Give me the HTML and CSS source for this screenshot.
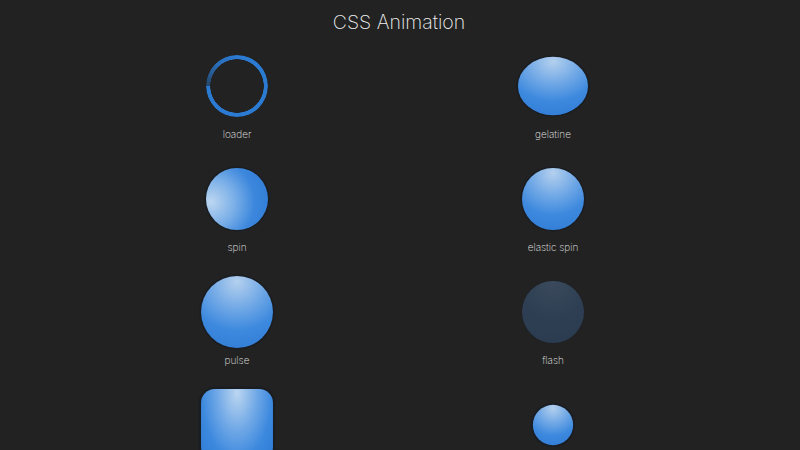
FILE: index.html
```html
<!DOCTYPE html>
<html>
<head>
<meta charset="utf-8">
<link rel="stylesheet" href="styles.css">
</head>
<body>
<h1 class="title">CSS Animation</h1>
<div class="grid">
  <div class="item"><div class="stage"><div class="loader"></div></div><div class="label">loader</div></div>
  <div class="item"><div class="stage"><div class="ball gelatine"></div></div><div class="label">gelatine</div></div>
  <div class="item"><div class="stage"><div class="ball spin"></div></div><div class="label">spin</div></div>
  <div class="item"><div class="stage"><div class="ball"></div></div><div class="label">elastic spin</div></div>
  <div class="item"><div class="stage"><div class="ball pulse"></div></div><div class="label">pulse</div></div>
  <div class="item"><div class="stage"><div class="ball flash"></div></div><div class="label">flash</div></div>
  <div class="item"><div class="stage"><div class="ball square"></div></div></div>
  <div class="item"><div class="stage"><div class="ball small"></div></div></div>
</div>
</body>
</html>
```
FILE: styles.css
```css
html, body {
  margin: 0;
  padding: 0;
  background: #222222;
  height: 100%;
  overflow: hidden;
}
body {
  font-family: Inter, "Noto Sans", sans-serif;
  color: #d8d8d8;
}
.title {
  margin: 0;
  height: 55px;
  padding-top: 9px;
  box-sizing: border-box;
  text-align: center;
  font-size: 19.5px;
  font-weight: 200;
  line-height: 26px;
  color: #f0f0f0;
  padding-right: 2px;
}
.grid {
  display: grid;
  grid-template-columns: 316px 316px;
  grid-auto-rows: 113px;
  justify-content: center;
  padding-right: 10px;
}
.item {
  display: flex;
  flex-direction: column;
  align-items: center;
}
.stage {
  width: 62px;
  height: 62px;
  position: relative;
}
.label {
  margin-top: 10px;
  font-size: 10px;
  line-height: 14px;
  font-weight: 200;
  color: #e0e0e0;
}
.loader {
  width: 62px;
  height: 62px;
  border-radius: 50%;
  background: conic-gradient(from 270deg, #24466a 0deg, #2b6eb8 50deg, #2b7bd3 90deg, #2b7bd3 360deg);
  -webkit-mask: radial-gradient(circle, transparent 26.5px, #000 27px);
  mask: radial-gradient(circle, transparent 26.5px, #000 27px);
}
.ball {
  width: 62px;
  height: 62px;
  border-radius: 50%;
  background: radial-gradient(circle at 50% 8%, #b4d0ee 0%, #72a9e6 35%, #3d89de 65%, #2f7bd6 100%);
  box-shadow: 0 0 0 1.5px #1a1d22;
}
.gelatine {
  transform: scale(1.13, 0.94);
}
.spin {
  background: radial-gradient(circle at 8% 55%, #bcd6f0 0%, #7cb0e8 35%, #3d88dd 65%, #2c78d4 100%);
}
.pulse {
  transform: scale(1.16);
}
.flash {
  background: radial-gradient(circle at 50% 5%, #3a4a5c 0%, #2f3f53 50%, #2a3b50 100%);
  box-shadow: 0 0 0 1px #1f2226;
}
.square {
  border-radius: 12px;
  transform: scale(1.16);
  background: radial-gradient(ellipse at 50% 5%, #bcd6f0 0%, #6ea7e6 40%, #3b88de 70%, #2f7bd6 100%);
  box-shadow: 0 0 0 2px #1a1d22;
}
.small {
  transform: scale(0.65);
  box-shadow: 0 0 0 3px #1a1d22;
}
```
